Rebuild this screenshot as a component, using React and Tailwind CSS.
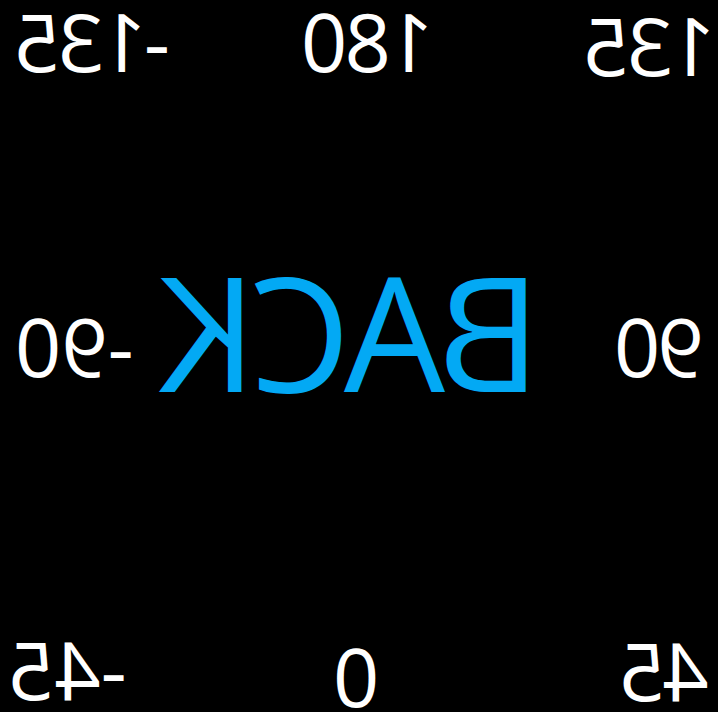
export default function App() {
  const f = { fontFamily: '"Open Sans", sans-serif' };
  return (
    <div className="w-[718px] h-[712px] bg-black text-white flex flex-col overflow-hidden" style={f}>
      <div className="flex items-start h-[81px] text-[81px] leading-none tracking-[-3px]">
        <span className="-scale-x-100 shrink-0 ml-[17px]">-135</span>
        <span className="-scale-x-100 shrink-0 ml-[134px]">180</span>
        <span className="-scale-x-100 shrink-0 ml-[152px] mt-[4px]">135</span>
      </div>
      <div className="flex items-start mt-[169px] h-[160px]">
        <span className="-scale-x-100 shrink-0 text-[81px] leading-none ml-[15px] mt-[55px]">-90</span>
        <span className="-scale-x-100 shrink-0 text-[160px] leading-none tracking-[-7px] text-[#03a9f4] ml-[32px]">BACK</span>
        <span className="-scale-x-100 shrink-0 text-[81px] leading-none tracking-[-3px] ml-[76px] mt-[55px]">90</span>
      </div>
      <div className="flex items-start mt-[218px] text-[81px] leading-none">
        <span className="-scale-x-100 shrink-0 ml-[8px]">-45</span>
        <span className="-scale-x-100 shrink-0 ml-[206px] mt-[7px]">0</span>
        <span className="-scale-x-100 shrink-0 ml-[243px] mt-[1px] tracking-[-3px]">45</span>
      </div>
    </div>
  );
}
